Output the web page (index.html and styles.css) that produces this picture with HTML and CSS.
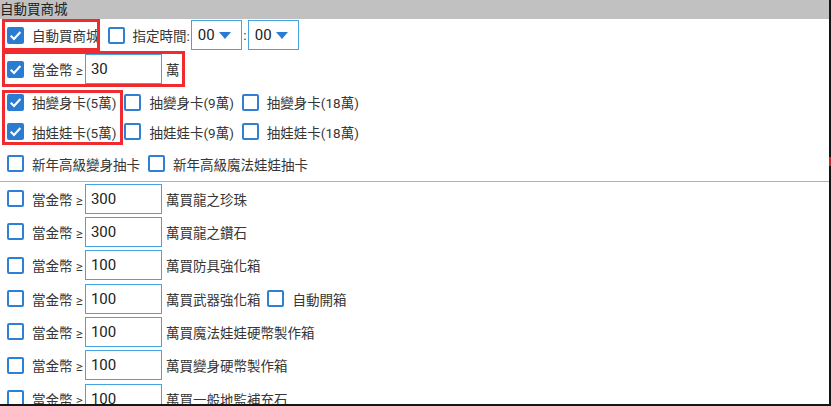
FILE: index.html
```html
<!DOCTYPE html>
<html lang="zh-Hant">
<head>
    <meta charset="UTF-8">
    <meta name="viewport" content="width=device-width, initial-scale=1.0">
    <title>自動買商城</title>
    <link rel="stylesheet" href="styles.css">
</head>
<body>
    <div class="screen">
        <div class="panel">
            <div class="header">自動買商城</div>

            <div class="row r1">
                <label class="item"><span class="cb on"><svg viewBox="0 0 16 16"><polyline points="3.5,8.2 6.6,11.2 12.6,4.8"/></svg></span>自動買商城</label>
                <label class="item"><span class="cb"></span>指定時間:</label>
                <div class="select"><span>00</span><svg viewBox="0 0 12 7"><polygon points="0,0 12,0 6,7"/></svg></div>
                <span class="colon">:</span>
                <div class="select"><span>00</span><svg viewBox="0 0 12 7"><polygon points="0,0 12,0 6,7"/></svg></div>
            </div>

            <div class="row r2">
                <label class="item"><span class="cb on"><svg viewBox="0 0 16 16"><polyline points="3.5,8.2 6.6,11.2 12.6,4.8"/></svg></span>當金幣 ≥</label>
                <input class="num" type="text" value="30">
                <span class="unit">萬</span>
            </div>

            <div class="row r3">
                <label class="item"><span class="cb on"><svg viewBox="0 0 16 16"><polyline points="3.5,8.2 6.6,11.2 12.6,4.8"/></svg></span>抽變身卡(5萬)</label>
                <label class="item"><span class="cb"></span>抽變身卡(9萬)</label>
                <label class="item"><span class="cb"></span>抽變身卡(18萬)</label>
            </div>

            <div class="row r4">
                <label class="item"><span class="cb on"><svg viewBox="0 0 16 16"><polyline points="3.5,8.2 6.6,11.2 12.6,4.8"/></svg></span>抽娃娃卡(5萬)</label>
                <label class="item"><span class="cb"></span>抽娃娃卡(9萬)</label>
                <label class="item"><span class="cb"></span>抽娃娃卡(18萬)</label>
            </div>

            <div class="row r5">
                <label class="item"><span class="cb"></span>新年高級變身抽卡</label>
                <label class="item"><span class="cb"></span>新年高級魔法娃娃抽卡</label>
            </div>

            <div class="divider"></div>

            <div class="row buy">
                <label class="item"><span class="cb"></span>當金幣 ≥</label>
                <input class="num" type="text" value="300">
                <span class="unit">萬買龍之珍珠</span>
            </div>
            <div class="row buy">
                <label class="item"><span class="cb"></span>當金幣 ≥</label>
                <input class="num" type="text" value="300">
                <span class="unit">萬買龍之鑽石</span>
            </div>
            <div class="row buy">
                <label class="item"><span class="cb"></span>當金幣 ≥</label>
                <input class="num" type="text" value="100">
                <span class="unit">萬買防具強化箱</span>
            </div>
            <div class="row buy">
                <label class="item"><span class="cb"></span>當金幣 ≥</label>
                <input class="num" type="text" value="100">
                <span class="unit">萬買武器強化箱</span>
                <label class="item"><span class="cb"></span>自動開箱</label>
            </div>
            <div class="row buy">
                <label class="item"><span class="cb"></span>當金幣 ≥</label>
                <input class="num" type="text" value="100">
                <span class="unit">萬買魔法娃娃硬幣製作箱</span>
            </div>
            <div class="row buy">
                <label class="item"><span class="cb"></span>當金幣 ≥</label>
                <input class="num" type="text" value="100">
                <span class="unit">萬買變身硬幣製作箱</span>
            </div>
            <div class="row buy">
                <label class="item"><span class="cb"></span>當金幣 ≥</label>
                <input class="num" type="text" value="100">
                <span class="unit">萬買一般地監補充石</span>
            </div>

            <!-- annotation boxes drawn over the form -->
            <div class="mark m1"></div>
            <div class="mark m2"></div>
            <div class="mark m3"></div>
        </div>
        <div class="edge">
            <div class="edge-red"></div>
        </div>
    </div>
</body>
</html>
```

FILE: styles.css
```css
body {
    margin: 0;
    background-color: #ffffff;
    font-family: Roboto, "Noto Sans CJK TC", "Noto Sans CJK SC", sans-serif;
    font-size: 13.5px;
    color: #363636;
}
.screen {
    display: flex;
    width: 831px;
    height: 406px;
    overflow: hidden;
}
.panel {
    position: relative;
    width: 829px;
    height: 404px;
    border-bottom: 2px solid #161616;
    overflow: hidden;
    background-color: #ffffff;
}
.edge {
    width: 2px;
    height: 406px;
    background-color: #141414;
    padding-top: 157px;
    box-sizing: border-box;
}
.edge-red {
    height: 9px;
    background-color: #c8252b;
}
.header {
    height: 19px;
    line-height: 19px;
    background-color: #c1c1c1;
    color: #222222;
    font-size: 13.5px;
}
.row {
    display: flex;
    align-items: center;
}
.r1 { height: 32px; }
.r2 { height: 36px; }
.r3 { height: 30px; }
.r4 { height: 29px; }
.r5 { height: 35px; }
.buy { height: 33.33px; }

.item {
    display: flex;
    align-items: center;
    margin-left: 7px;
    margin-right: 1px;
    white-space: nowrap;
}
.cb {
    width: 17px;
    height: 17px;
    box-sizing: border-box;
    border: 2px solid #2f80d4;
    border-radius: 2px;
    margin-right: 8px;
    display: flex;
}
.cb.on {
    background-color: #2a7bd2;
    border-color: #2a7bd2;
}
.cb svg {
    width: 17px;
    height: 17px;
    margin: -2px;
    fill: none;
    stroke: #ffffff;
    stroke-width: 2;
}
.select {
    width: 51px;
    height: 30px;
    box-sizing: border-box;
    border: 1px solid #45a3e0;
    display: flex;
    align-items: center;
    padding-left: 6px;
    margin-left: 0;
    font-size: 15px;
    color: #222222;
}
.select svg {
    width: 12px;
    height: 7px;
    margin-left: 4px;
    fill: #2a7bd2;
}
.colon {
    width: 6px;
    text-align: center;
    color: #363636;
}
.num {
    width: 77px;
    height: 30px;
    box-sizing: border-box;
    border: 1px solid #45a3e0;
    margin: 0 0 0 1px;
    padding: 0 5px;
    font-family: Roboto, "Noto Sans CJK TC", sans-serif;
    font-size: 15px;
    color: #222222;
    background-color: #ffffff;
    outline: none;
}
.unit {
    margin-left: 4px;
    white-space: nowrap;
}
.divider {
    height: 1px;
    background-color: #b3b3b3;
}
.mark {
    position: absolute;
    border: 3px solid #ef2b30;
    box-sizing: border-box;
}
.m1 { left: 2px; top: 19px; width: 98px; height: 32px; }
.m2 { left: 2px; top: 51px; width: 183px; height: 36px; }
.m3 { left: 2px; top: 90px; width: 121px; height: 55px; }
```
